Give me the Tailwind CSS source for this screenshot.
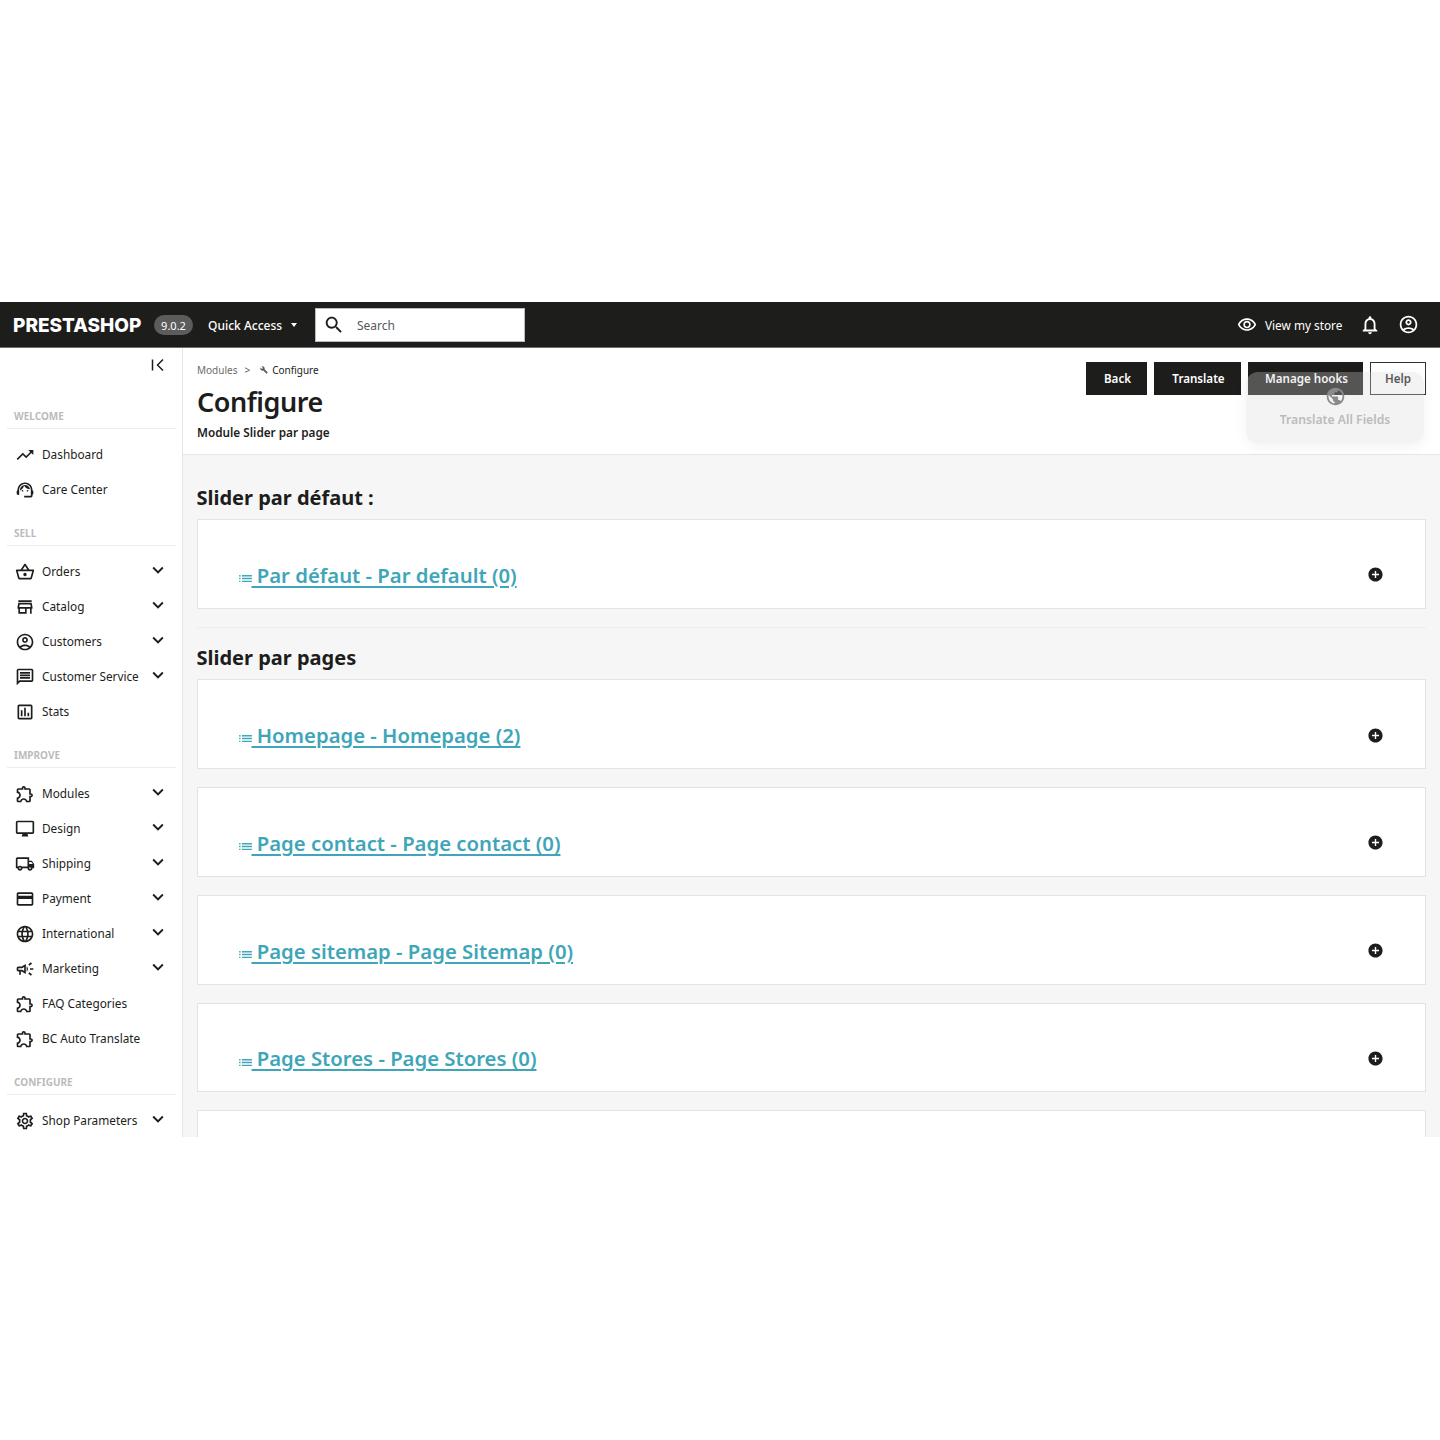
<!DOCTYPE html>
<html lang="en">
<head>
<meta charset="utf-8">
<title>Configure</title>
<script src="https://cdn.jsdelivr.net/npm/@tailwindcss/browser@4"></script>
</head>
<body class="bg-white font-['Noto_Sans',sans-serif] text-[#1d1d1b]">

<!-- icon sprite -->
<svg class="hidden" xmlns="http://www.w3.org/2000/svg">
  <symbol id="i-chevron" viewBox="0 0 24 24"><path d="M7.41 8.59 12 13.17l4.59-4.58L18 10l-6 6-6-6z"/></symbol>
  <symbol id="i-trend" viewBox="0 0 24 24"><path d="M16 6l2.29 2.29-4.88 4.88-4-4L2 16.59 3.41 18l6-6 4 4 6.3-6.29L22 12V6z"/></symbol>
  <symbol id="i-agent" viewBox="0 0 24 24"><path d="M21 12.22C21 6.73 16.74 3 12 3c-4.69 0-9 3.65-9 9.28-.6.34-1 .98-1 1.72v2c0 1.1.9 2 2 2h1v-6.1c0-3.87 3.13-7 7-7s7 3.13 7 7V19h-8v2h8c1.1 0 2-.9 2-2v-1.22c.59-.31 1-.92 1-1.64v-2.3c0-.7-.41-1.31-1-1.62z"/><circle cx="9" cy="13" r="1"/><circle cx="15" cy="13" r="1"/><path d="M18 11.03C17.52 8.18 15.04 6 12.05 6c-3.03 0-6.29 2.51-6.03 6.45 2.47-1.01 4.33-3.21 4.86-5.89 1.31 2.63 4 4.44 7.12 4.47z"/></symbol>
  <symbol id="i-basket" viewBox="0 0 24 24"><path d="M22 9h-4.79l-4.38-6.56c-.19-.28-.51-.42-.83-.42s-.64.14-.83.43L6.79 9H2c-.55 0-1 .45-1 1 0 .09.01.18.04.27l2.54 9.27c.23.84 1 1.46 1.92 1.46h13c.92 0 1.69-.62 1.93-1.46l2.54-9.27L23 10c0-.55-.45-1-1-1zM12 4.8L14.8 9H9.2L12 4.8zM18.5 19l-12.99.01L3.31 11H20.7l-2.2 8zM12 13c-1.1 0-2 .9-2 2s.9 2 2 2 2-.9 2-2-.9-2-2-2z"/></symbol>
  <symbol id="i-store" viewBox="0 0 24 24"><path d="M18.36 9l.6 3H5.04l.6-3h12.72M20 4H4v2h16V4zm0 3H4l-1 5v2h1v6h10v-6h4v6h2v-6h1v-2l-1-5zM6 18v-4h6v4H6z"/></symbol>
  <symbol id="i-account" viewBox="0 0 24 24"><path d="M12 2C6.48 2 2 6.48 2 12s4.48 10 10 10 10-4.48 10-10S17.52 2 12 2zM7.35 18.5C8.66 17.56 10.26 17 12 17s3.34.56 4.65 1.5c-1.31.94-2.91 1.5-4.65 1.5s-3.34-.56-4.65-1.5zm10.79-1.38C16.45 15.8 14.32 15 12 15s-4.45.8-6.14 2.12C4.7 15.73 4 13.95 4 12c0-4.42 3.58-8 8-8s8 3.58 8 8c0 1.95-.7 3.73-1.86 5.12z"/><path d="M12 6c-1.93 0-3.5 1.57-3.5 3.5S10.07 13 12 13s3.5-1.57 3.5-3.5S13.93 6 12 6zm0 5c-.83 0-1.5-.67-1.5-1.5S11.17 8 12 8s1.5.67 1.5 1.5S12.83 11 12 11z"/></symbol>
  <symbol id="i-chat" viewBox="0 0 24 24"><path d="M20 2H4c-1.1 0-1.99.9-1.99 2L2 22l4-4h14c1.1 0 2-.9 2-2V4c0-1.1-.9-2-2-2zm0 14H5.17L4 17.17V4h16v12zM6 12h12v2H6zm0-3h12v2H6zm0-3h12v2H6z"/></symbol>
  <symbol id="i-stats" viewBox="0 0 24 24"><path d="M19 3H5c-1.1 0-2 .9-2 2v14c0 1.1.9 2 2 2h14c1.1 0 2-.9 2-2V5c0-1.1-.9-2-2-2zm0 16H5V5h14v14zM7 10h2v7H7zm4-3h2v10h-2zm4 6h2v4h-2z"/></symbol>
  <symbol id="i-ext" viewBox="0 0 24 24"><path d="M10.5 4.5c.28 0 .5.22.5.5v2h6v6h2c.28 0 .5.22.5.5s-.22.5-.5.5h-2v6h-2.12c-.68-1.75-2.39-3-4.38-3s-3.7 1.25-4.38 3H4v-2.12c1.75-.68 3-2.39 3-4.38 0-1.99-1.24-3.7-2.99-4.38L4 7h6V5c0-.28.22-.5.5-.5m0-2C9.12 2.5 8 3.62 8 5H4c-1.1 0-1.99.9-1.99 2v3.8h.29c1.49 0 2.7 1.21 2.7 2.7s-1.21 2.7-2.7 2.7H2V20c0 1.1.9 2 2 2h3.8v-.3c0-1.49 1.21-2.7 2.7-2.7 1.49 0 2.7 1.21 2.7 2.7v.3H17c1.1 0 2-.9 2-2v-4c1.38 0 2.5-1.12 2.5-2.5S20.38 11 19 11V7c0-1.1-.9-2-2-2h-4c0-1.38-1.12-2.5-2.5-2.5z"/></symbol>
  <symbol id="i-desktop" viewBox="0 0 24 24"><path d="M21 2H3c-1.1 0-2 .9-2 2v12c0 1.1.9 2 2 2h6l-1 3h8l-1-3h6c1.1 0 2-.9 2-2V4c0-1.1-.9-2-2-2zm0 14H3V4h18v12z"/></symbol>
  <symbol id="i-truck" viewBox="0 0 24 24"><path d="M20 8h-3V4H3c-1.1 0-2 .9-2 2v11h2c0 1.66 1.34 3 3 3s3-1.34 3-3h6c0 1.66 1.34 3 3 3s3-1.34 3-3h2v-5l-3-4zm-.5 1.5l1.96 2.5H17V9.5h2.5zM6 18c-.55 0-1-.45-1-1s.45-1 1-1 1 .45 1 1-.45 1-1 1zm2.22-3c-.55-.61-1.33-1-2.22-1s-1.67.39-2.22 1H3V6h12v9H8.22zM18 18c-.55 0-1-.45-1-1s.45-1 1-1 1 .45 1 1-.45 1-1 1z"/></symbol>
  <symbol id="i-card" viewBox="0 0 24 24"><path d="M20 4H4c-1.11 0-1.99.89-1.99 2L2 18c0 1.11.89 2 2 2h16c1.11 0 2-.89 2-2V6c0-1.11-.89-2-2-2zm0 14H4v-6h16v6zm0-10H4V6h16v2z"/></symbol>
  <symbol id="i-globe" viewBox="0 0 24 24"><path d="M11.99 2C6.47 2 2 6.48 2 12s4.47 10 9.99 10C17.52 22 22 17.52 22 12S17.52 2 11.99 2zm6.93 6h-2.95c-.32-1.25-.78-2.45-1.38-3.56 1.84.63 3.37 1.91 4.33 3.56zM12 4.04c.83 1.2 1.48 2.53 1.91 3.96h-3.82c.43-1.43 1.08-2.76 1.91-3.96zM4.26 14C4.1 13.36 4 12.69 4 12s.1-1.36.26-2h3.38c-.08.66-.14 1.32-.14 2 0 .68.06 1.34.14 2H4.26zm.82 2h2.95c.32 1.25.78 2.45 1.38 3.56-1.84-.63-3.37-1.9-4.33-3.56zm2.95-8H5.08c.96-1.66 2.49-2.93 4.33-3.56C8.81 5.55 8.35 6.75 8.03 8zM12 19.96c-.83-1.2-1.48-2.53-1.91-3.96h3.82c-.43 1.43-1.08 2.76-1.91 3.96zM14.34 14H9.66c-.09-.66-.16-1.32-.16-2 0-.68.07-1.35.16-2h4.68c.09.65.16 1.32.16 2 0 .68-.07 1.34-.16 2zm.25 5.56c.6-1.11 1.06-2.31 1.38-3.56h2.95c-.96 1.65-2.49 2.93-4.33 3.56zM16.36 14c.08-.66.14-1.32.14-2 0-.68-.06-1.34-.14-2h3.38c.16.64.26 1.31.26 2s-.1 1.36-.26 2h-3.38z"/></symbol>
  <symbol id="i-campaign" viewBox="0 0 24 24"><path d="M18 11v2h4v-2h-4zm-2 6.61c.96.71 2.21 1.65 3.2 2.39.4-.53.8-1.07 1.2-1.6-.99-.74-2.24-1.68-3.2-2.4-.4.54-.8 1.08-1.2 1.61zM20.4 5.6c-.4-.53-.8-1.07-1.2-1.6-.99.74-2.24 1.68-3.2 2.4.4.53.8 1.07 1.2 1.6.96-.72 2.21-1.65 3.2-2.4zM4 9c-1.1 0-2 .9-2 2v2c0 1.1.9 2 2 2h1v4h2v-4h1l5 3V6L8 9H4zm5.03 1.71L11 9.53v4.94l-1.97-1.18-.48-.29H4v-2h4.55l.48-.29zM15.5 12c0-1.33-.58-2.53-1.5-3.35v6.69c.92-.81 1.5-2.01 1.5-3.34z"/></symbol>
  <symbol id="i-settings" viewBox="0 0 24 24"><path d="M19.43 12.98c.04-.32.07-.64.07-.98 0-.34-.03-.66-.07-.98l2.11-1.65c.19-.15.24-.42.12-.64l-2-3.46c-.09-.16-.26-.25-.44-.25-.06 0-.12.01-.17.03l-2.49 1c-.52-.4-1.08-.73-1.69-.98l-.38-2.65C14.46 2.18 14.25 2 14 2h-4c-.25 0-.46.18-.49.42l-.38 2.65c-.61.25-1.17.59-1.69.98l-2.49-1c-.06-.02-.12-.03-.18-.03-.17 0-.34.09-.43.25l-2 3.46c-.13.22-.07.49.12.64l2.11 1.65c-.04.32-.07.65-.07.98 0 .33.03.66.07.98l-2.11 1.65c-.19.15-.24.42-.12.64l2 3.46c.09.16.26.25.44.25.06 0 .12-.01.17-.03l2.49-1c.52.4 1.08.73 1.69.98l.38 2.65c.03.24.24.42.49.42h4c.25 0 .46-.18.49-.42l.38-2.65c.61-.25 1.17-.59 1.69-.98l2.49 1c.06.02.12.03.18.03.17 0 .34-.09.43-.25l2-3.46c.12-.22.07-.49-.12-.64l-2.11-1.65zm-1.98-1.71c.04.31.05.52.05.73 0 .21-.02.43-.05.73l-.14 1.13.89.7 1.08.84-.7 1.21-1.27-.51-1.04-.42-.9.68c-.43.32-.84.56-1.25.73l-1.06.43-.16 1.13-.2 1.35h-1.4l-.19-1.35-.16-1.13-1.06-.43c-.43-.18-.83-.41-1.23-.71l-.91-.7-1.06.43-1.27.51-.7-1.21 1.08-.84.89-.7-.14-1.13c-.03-.31-.05-.54-.05-.74s.02-.43.05-.73l.14-1.13-.89-.7-1.08-.84.7-1.21 1.27.51 1.04.42.9-.68c.43-.32.84-.56 1.25-.73l1.06-.43.16-1.13.2-1.35h1.39l.19 1.35.16 1.13 1.06.43c.43.18.83.41 1.23.71l.91.7 1.06-.43 1.27-.51.7 1.21-1.07.85-.89.7.14 1.13zM12 8c-2.21 0-4 1.79-4 4s1.79 4 4 4 4-1.79 4-4-1.79-4-4-4zm0 6c-1.1 0-2-.9-2-2s.9-2 2-2 2 .9 2 2-.9 2-2 2z"/></symbol>
  <symbol id="i-list" viewBox="0 0 24 24"><path d="M3 13h2v-2H3v2zm0 4h2v-2H3v2zm0-8h2V7H3v2zm4 4h14v-2H7v2zm0 4h14v-2H7v2zM7 7v2h14V7H7z"/></symbol>
  <symbol id="i-add" viewBox="0 0 24 24"><path d="M12 2C6.48 2 2 6.48 2 12s4.48 10 10 10 10-4.48 10-10S17.52 2 12 2zm5 11h-4v4h-2v-4H7v-2h4V7h2v4h4v2z"/></symbol>
</svg>

<div class="h-[302px]"></div>

<div class="h-[835px] overflow-hidden flex flex-col">
  <!-- top bar -->
  <header class="h-[46px] shrink-0 bg-[#1d1d1b] border-b border-[#6c6c6c] flex items-center text-white">
    <span class="ml-[13px] pt-[3px] w-[128px] text-[19px] font-extrabold whitespace-nowrap font-['Inter',sans-serif]">PRESTASHOP</span>
    <span class="ml-[13px] w-[39px] h-[20px] rounded-full bg-[#5c5c5c] text-[11px] text-center leading-[21px]">9.0.2</span>
    <span class="ml-[15px] pt-[2px] text-[12px] font-medium whitespace-nowrap w-[75px]">Quick Access</span>
    <span class="ml-[8px] w-0 h-0 border-x-[3.5px] border-x-transparent border-t-[4px] border-t-white"></span>
    <div class="ml-[18px] w-[210px] h-[34px] bg-white border border-[#bbbbbb] flex items-center text-[#55595c] text-[12px]">
      <svg class="ml-[7px] w-[22px] h-[22px] fill-[#1d1d1b]" viewBox="0 0 24 24"><path d="M15.5 14h-.79l-.28-.27C15.41 12.59 16 11.11 16 9.5 16 5.91 13.09 3 9.5 3S3 5.91 3 9.5 5.91 16 9.5 16c1.61 0 3.09-.59 4.23-1.57l.27.28v.79l5 4.99L20.49 19l-4.99-5zm-6 0C7.01 14 5 11.99 5 9.5S7.01 5 9.5 5 14 7.01 14 9.5 11.99 14 9.5 14z"/></svg>
      <span class="ml-[12px] pt-[2px]">Search</span>
    </div>
    <div class="ml-auto flex items-center">
      <svg class="w-[20px] h-[20px] fill-white" viewBox="0 0 24 24"><path d="M12 6c3.79 0 7.17 2.13 8.82 5.5C19.17 14.87 15.79 17 12 17s-7.17-2.13-8.82-5.5C4.83 8.13 8.21 6 12 6m0-2C7 4 2.73 7.11 1 11.5 2.73 15.89 7 19 12 19s9.27-3.11 11-7.5C21.27 7.11 17 4 12 4zm0 5c1.38 0 2.5 1.12 2.5 2.5S13.38 14 12 14s-2.5-1.12-2.5-2.5S10.62 9 12 9m0-2c-2.48 0-4.5 2.02-4.5 4.5S9.52 16 12 16s4.5-2.02 4.5-4.5S14.48 7 12 7z"/></svg>
      <span class="ml-[8px] pt-[2px] w-[78px] text-[11.8px] whitespace-nowrap">View my store</span>
      <svg class="ml-[16px] w-[22px] h-[22px] fill-white" viewBox="0 0 24 24"><path d="M12 22c1.1 0 2-.9 2-2h-4c0 1.1.9 2 2 2zm6-6v-5c0-3.07-1.63-5.64-4.5-6.32V4c0-.83-.67-1.5-1.5-1.5s-1.5.67-1.5 1.5v.68C7.64 5.36 6 7.92 6 11v5l-2 2v1h16v-1l-2-2zm-2 1H8v-6c0-2.48 1.51-4.5 4-4.5s4 2.02 4 4.5v6z"/></svg>
      <svg class="ml-[17px] mr-[21px] w-[21px] h-[21px] fill-white"><use href="#i-account"/></svg>
    </div>
  </header>

  <div class="flex flex-1 min-h-0">
    <!-- sidebar -->
    <aside class="w-[183px] shrink-0 bg-white border-r border-[#e7e7e7] text-[11.8px] text-[#1d1d1b]">
      <div class="h-[61px] pt-[10px] pl-[151px]">
        <svg class="w-[14px] h-[14px] fill-none stroke-[#1d1d1b] stroke-[1.5]" viewBox="0 0 14 14"><path d="M1.5 1.5v11M12 1.5 6.5 7l5.5 5.5"/></svg>
      </div>

      <div class="ml-[7px] mr-[6px] h-[20px] border-b border-[#ececec] pl-[7px] text-[10px] leading-[14px] font-bold text-[#bbbbbb]">WELCOME</div>
      <nav class="mt-[8px] mb-[19px]">
        <a class="h-[35px] flex items-center pl-[15px]"><svg class="w-[20px] h-[20px] fill-[#1d1d1b]"><use href="#i-trend"/></svg><span class="ml-[7px]">Dashboard</span></a>
        <a class="h-[35px] flex items-center pl-[15px]"><svg class="w-[20px] h-[20px] fill-[#1d1d1b]"><use href="#i-agent"/></svg><span class="ml-[7px]">Care Center</span></a>
      </nav>

      <div class="ml-[7px] mr-[6px] h-[20px] border-b border-[#ececec] pl-[7px] text-[10px] leading-[14px] font-bold text-[#bbbbbb]">SELL</div>
      <nav class="mt-[8px] mb-[19px]">
        <a class="h-[35px] flex items-center pl-[15px] pr-[13px]"><svg class="w-[20px] h-[20px] fill-[#1d1d1b]"><use href="#i-basket"/></svg><span class="ml-[7px]">Orders</span><svg class="ml-auto mb-[4px] w-[22px] h-[22px] fill-[#1d1d1b]"><use href="#i-chevron"/></svg></a>
        <a class="h-[35px] flex items-center pl-[15px] pr-[13px]"><svg class="w-[20px] h-[20px] fill-[#1d1d1b]"><use href="#i-store"/></svg><span class="ml-[7px]">Catalog</span><svg class="ml-auto mb-[4px] w-[22px] h-[22px] fill-[#1d1d1b]"><use href="#i-chevron"/></svg></a>
        <a class="h-[35px] flex items-center pl-[15px] pr-[13px]"><svg class="w-[20px] h-[20px] fill-[#1d1d1b]"><use href="#i-account"/></svg><span class="ml-[7px]">Customers</span><svg class="ml-auto mb-[4px] w-[22px] h-[22px] fill-[#1d1d1b]"><use href="#i-chevron"/></svg></a>
        <a class="h-[35px] flex items-center pl-[15px] pr-[13px]"><svg class="w-[20px] h-[20px] fill-[#1d1d1b]"><use href="#i-chat"/></svg><span class="ml-[7px] whitespace-nowrap">Customer Service</span><svg class="ml-auto mb-[4px] w-[22px] h-[22px] fill-[#1d1d1b]"><use href="#i-chevron"/></svg></a>
        <a class="h-[35px] flex items-center pl-[15px]"><svg class="w-[20px] h-[20px] fill-[#1d1d1b]"><use href="#i-stats"/></svg><span class="ml-[7px]">Stats</span></a>
      </nav>

      <div class="ml-[7px] mr-[6px] h-[20px] border-b border-[#ececec] pl-[7px] text-[10px] leading-[14px] font-bold text-[#bbbbbb]">IMPROVE</div>
      <nav class="mt-[8px] mb-[19px]">
        <a class="h-[35px] flex items-center pl-[15px] pr-[13px]"><svg class="w-[20px] h-[20px] fill-[#1d1d1b]"><use href="#i-ext"/></svg><span class="ml-[7px]">Modules</span><svg class="ml-auto mb-[4px] w-[22px] h-[22px] fill-[#1d1d1b]"><use href="#i-chevron"/></svg></a>
        <a class="h-[35px] flex items-center pl-[15px] pr-[13px]"><svg class="w-[20px] h-[20px] fill-[#1d1d1b]"><use href="#i-desktop"/></svg><span class="ml-[7px]">Design</span><svg class="ml-auto mb-[4px] w-[22px] h-[22px] fill-[#1d1d1b]"><use href="#i-chevron"/></svg></a>
        <a class="h-[35px] flex items-center pl-[15px] pr-[13px]"><svg class="w-[20px] h-[20px] fill-[#1d1d1b]"><use href="#i-truck"/></svg><span class="ml-[7px]">Shipping</span><svg class="ml-auto mb-[4px] w-[22px] h-[22px] fill-[#1d1d1b]"><use href="#i-chevron"/></svg></a>
        <a class="h-[35px] flex items-center pl-[15px] pr-[13px]"><svg class="w-[20px] h-[20px] fill-[#1d1d1b]"><use href="#i-card"/></svg><span class="ml-[7px]">Payment</span><svg class="ml-auto mb-[4px] w-[22px] h-[22px] fill-[#1d1d1b]"><use href="#i-chevron"/></svg></a>
        <a class="h-[35px] flex items-center pl-[15px] pr-[13px]"><svg class="w-[20px] h-[20px] fill-[#1d1d1b]"><use href="#i-globe"/></svg><span class="ml-[7px]">International</span><svg class="ml-auto mb-[4px] w-[22px] h-[22px] fill-[#1d1d1b]"><use href="#i-chevron"/></svg></a>
        <a class="h-[35px] flex items-center pl-[15px] pr-[13px]"><svg class="w-[20px] h-[20px] fill-[#1d1d1b]"><use href="#i-campaign"/></svg><span class="ml-[7px]">Marketing</span><svg class="ml-auto mb-[4px] w-[22px] h-[22px] fill-[#1d1d1b]"><use href="#i-chevron"/></svg></a>
        <a class="h-[35px] flex items-center pl-[15px]"><svg class="w-[20px] h-[20px] fill-[#1d1d1b]"><use href="#i-ext"/></svg><span class="ml-[7px]">FAQ Categories</span></a>
        <a class="h-[35px] flex items-center pl-[15px]"><svg class="w-[20px] h-[20px] fill-[#1d1d1b]"><use href="#i-ext"/></svg><span class="ml-[7px]">BC Auto Translate</span></a>
      </nav>

      <div class="ml-[7px] mr-[6px] h-[20px] border-b border-[#ececec] pl-[7px] text-[10px] leading-[14px] font-bold text-[#bbbbbb]">CONFIGURE</div>
      <nav class="mt-[8px]">
        <a class="h-[35px] flex items-center pl-[15px] pr-[13px]"><svg class="w-[20px] h-[20px] fill-[#1d1d1b]"><use href="#i-settings"/></svg><span class="ml-[7px]">Shop Parameters</span><svg class="ml-auto mb-[4px] w-[22px] h-[22px] fill-[#1d1d1b]"><use href="#i-chevron"/></svg></a>
      </nav>
    </aside>

    <main class="flex-1 min-w-0 bg-[#f6f6f6]">
      <!-- page head -->
      <section class="relative h-[107px] bg-white border-b border-[#e7e7e7] pl-[14px] pr-[14px] flex justify-between">
        <div>
          <div class="pt-[14px] h-[30px] flex items-center text-[10px] leading-[16px]">
            <span class="text-[#6c6c6c]">Modules</span>
            <span class="ml-[7px] text-[#55595c]">&gt;</span>
            <svg class="ml-[10px] w-[8px] h-[8px] fill-[#55595c]" viewBox="0 0 24 24"><path d="M22.7 19l-9.1-9.1c.9-2.3.4-5-1.5-6.9-2-2-5-2.4-7.4-1.3L9 6 6 9 1.6 4.7C.4 7.1.9 10.1 2.9 12.1c1.9 1.9 4.6 2.4 6.9 1.5l9.1 9.1c.4.4 1 .4 1.4 0l2.3-2.3c.5-.4.5-1.1.1-1.4z"/></svg>
            <span class="ml-[4px]">Configure</span>
          </div>
          <h1 class="mt-[6px] text-[27px] leading-[36px] font-semibold tracking-[-0.45px]">Configure</h1>
          <p class="mt-[5px] text-[11.75px] leading-[15px] font-semibold">Module Slider par page</p>
        </div>
        <div class="pt-[14px] flex items-start gap-[7px] text-[11.6px] font-semibold">
          <button class="h-[33px] w-[61px] pl-[2px] bg-[#1d1d1b] text-white">Back</button>
          <button class="h-[33px] w-[87px] pl-[2px] bg-[#1d1d1b] text-white">Translate</button>
          <button class="h-[33px] w-[115px] pl-[2px] bg-[#1d1d1b] text-white">Manage hooks</button>
          <button class="h-[33px] w-[56px] bg-white border border-[#333333] text-[#1d1d1b]">Help</button>
        </div>
        <!-- floating translate widget sits over the buttons -->
        <div class="absolute left-[1063px] top-[24px] w-[178px] h-[71px] rounded-[12px] bg-[#d8d8d8]/30 shadow-[0_4px_14px_rgba(0,0,0,0.05)] flex flex-col items-center">
          <svg class="mt-[14px] w-[21px] h-[21px] fill-[#8a8a8a]" viewBox="0 0 24 24"><path d="M12 2C6.48 2 2 6.48 2 12s4.48 10 10 10 10-4.48 10-10S17.52 2 12 2zm-1 17.93c-3.95-.49-7-3.85-7-7.93 0-.62.08-1.21.21-1.79L9 15v1c0 1.1.9 2 2 2v1.93zm6.9-2.54c-.26-.81-1-1.39-1.9-1.39h-1v-3c0-.55-.45-1-1-1H8v-2h2c.55 0 1-.45 1-1V7h2c1.1 0 2-.9 2-2v-.41c2.93 1.19 5 4.06 5 7.41 0 2.08-.8 3.97-2.1 5.39z"/></svg>
          <span class="mt-[4px] text-[12.2px] font-semibold text-[#bbbbbb] whitespace-nowrap">Translate All Fields</span>
        </div>
      </section>

      <!-- accordions -->
      <section class="pl-[13.5px] pr-[14px]">
        <h2 class="pt-[30px] mb-[8px] text-[20px] leading-[26px] font-bold">Slider par défaut :</h2>
        <div class="h-[89.8px] bg-white border border-[#e3e3e3] pt-[22px] pl-[39px] pr-[41px] flex items-center justify-between">
          <a class="text-[20.3px] font-semibold text-[#3ea6b8] underline underline-offset-[3px] whitespace-nowrap"><svg class="inline-block w-[17px] h-[17px] fill-[#3ea6b8] -mb-[3px] -mr-[2px]"><use href="#i-list"/></svg> Par défaut - Par default (0)</a>
          <svg class="w-[17px] h-[17px] fill-[#1d1d1b]"><use href="#i-add"/></svg>
        </div>

        <hr class="mt-[18px] border-[#ececec]">

        <h2 class="mt-[17px] mb-[8.5px] text-[20px] leading-[26px] font-bold">Slider par pages</h2>
        <div class="h-[89.8px] mb-[18px] bg-white border border-[#e3e3e3] pt-[22px] pl-[39px] pr-[41px] flex items-center justify-between">
          <a class="text-[20.3px] font-semibold text-[#3ea6b8] underline underline-offset-[3px] whitespace-nowrap"><svg class="inline-block w-[17px] h-[17px] fill-[#3ea6b8] -mb-[3px] -mr-[2px]"><use href="#i-list"/></svg> Homepage - Homepage (2)</a>
          <svg class="w-[17px] h-[17px] fill-[#1d1d1b]"><use href="#i-add"/></svg>
        </div>
        <div class="h-[89.8px] mb-[18px] bg-white border border-[#e3e3e3] pt-[22px] pl-[39px] pr-[41px] flex items-center justify-between">
          <a class="text-[20.3px] font-semibold text-[#3ea6b8] underline underline-offset-[3px] whitespace-nowrap"><svg class="inline-block w-[17px] h-[17px] fill-[#3ea6b8] -mb-[3px] -mr-[2px]"><use href="#i-list"/></svg> Page contact - Page contact (0)</a>
          <svg class="w-[17px] h-[17px] fill-[#1d1d1b]"><use href="#i-add"/></svg>
        </div>
        <div class="h-[89.8px] mb-[18px] bg-white border border-[#e3e3e3] pt-[22px] pl-[39px] pr-[41px] flex items-center justify-between">
          <a class="text-[20.3px] font-semibold text-[#3ea6b8] underline underline-offset-[3px] whitespace-nowrap"><svg class="inline-block w-[17px] h-[17px] fill-[#3ea6b8] -mb-[3px] -mr-[2px]"><use href="#i-list"/></svg> Page sitemap - Page Sitemap (0)</a>
          <svg class="w-[17px] h-[17px] fill-[#1d1d1b]"><use href="#i-add"/></svg>
        </div>
        <div class="h-[89.8px] mb-[18px] bg-white border border-[#e3e3e3] pt-[22px] pl-[39px] pr-[41px] flex items-center justify-between">
          <a class="text-[20.3px] font-semibold text-[#3ea6b8] underline underline-offset-[3px] whitespace-nowrap"><svg class="inline-block w-[17px] h-[17px] fill-[#3ea6b8] -mb-[3px] -mr-[2px]"><use href="#i-list"/></svg> Page Stores - Page Stores (0)</a>
          <svg class="w-[17px] h-[17px] fill-[#1d1d1b]"><use href="#i-add"/></svg>
        </div>
        <div class="h-[89.8px] bg-white border border-[#e3e3e3]"></div>
      </section>
    </main>
  </div>
</div>

</body>
</html>
